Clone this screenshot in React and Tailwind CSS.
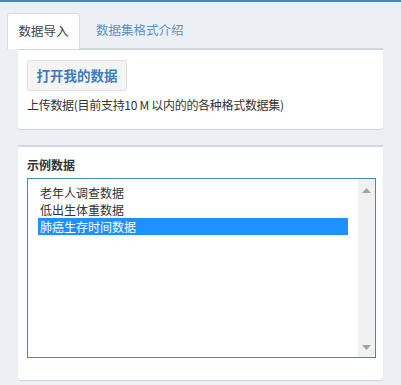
import React from 'react';

const FONT = { fontFamily: '"Noto Sans CJK SC", "Noto Sans", sans-serif' };

const samples = ['老年人调查数据', '低出生体重数据', '肺癌生存时间数据'];

// 小三角，滚动条上下箭头
const Arrow = ({ up }) => (
  <svg width="9" height="5" viewBox="0 0 9 5">
    <path d={up ? 'M0 5 L4.5 0 L9 5 Z' : 'M0 0 L4.5 5 L9 0 Z'} fill="#a3a3a3" />
  </svg>
);

export default function App() {
  return (
    <div
      className="w-[401px] h-[385px] overflow-hidden bg-[#ecf0f5] border-t-2 border-[#3c8dbc] text-[#333]"
      style={FONT}
    >
      {/* ── 标签栏 ── */}
      <div className="flex pt-[11px] pl-[7px]">
        <div className="relative z-10 h-[36px] -mb-[1px] w-[73px] flex items-center justify-center bg-white border border-b-0 border-[#dcdcdc] rounded-t-[3px] text-[12.5px] text-[#444]">
          数据导入
        </div>
        <div className="h-[35px] px-[16px] flex items-center text-[12.5px] text-[#5a8fc4]">
          数据集格式介绍
        </div>
      </div>

      {/* ── 上传数据 ── */}
      <div className="mx-[18px] h-[81px] bg-white border-t-2 border-[#d2d6de] rounded-b-[3px] shadow-[0_1px_1px_rgba(0,0,0,0.12)] px-[9px] pt-[10px]">
        <button className="h-[31px] w-[100px] flex items-center justify-center bg-[#f4f4f4] border border-[#ddd] rounded-[3px] text-[13.5px] font-bold text-[#3f7cb8]">
          打开我的数据
        </button>
        <p className="mt-[5px] text-[12px] leading-[17px] tracking-[-0.3px] text-[#333]">
          上传数据(目前支持10 M 以内的的各种格式数据集)
        </p>
      </div>

      {/* ── 示例数据 ── */}
      <div className="mx-[18px] mt-4 h-[235px] bg-white border-t-2 border-[#d2d6de] rounded-b-[3px] shadow-[0_1px_1px_rgba(0,0,0,0.12)] pl-[9px] pr-[7px] pt-[9px]">
        <div className="text-[12px] leading-[17px] font-bold text-[#333]">示例数据</div>
        <div className="mt-[5px] h-[180px] flex border border-[#3c8dbc]">
          <div className="flex-1 pt-[5px] px-[10px]">
            {samples.map((s, i) => (
              <div
                key={s}
                className={
                  i === 2
                    ? 'h-[17px] leading-[17px] px-[2px] text-[12px] bg-[#1e90ff] text-white'
                    : 'h-[17px] leading-[17px] px-[2px] text-[12px] text-[#333]'
                }
              >
                {s}
              </div>
            ))}
          </div>
          <div className="w-[17px] bg-[#f1f1f1] flex flex-col items-center justify-between pt-[9px] pb-[7px]">
            <Arrow up />
            <Arrow />
          </div>
        </div>
      </div>
    </div>
  );
}
